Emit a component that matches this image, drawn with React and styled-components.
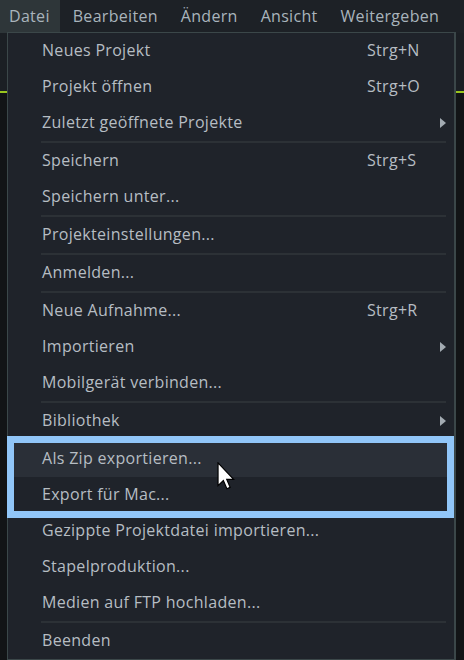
import React from 'react';
import styled, { createGlobalStyle } from 'styled-components';

const GlobalStyle = createGlobalStyle`
  html, body {
    margin: 0;
    padding: 0;
    background: #121416;
  }
  body {
    font-family: "Open Sans", Lato, sans-serif;
    -webkit-font-smoothing: antialiased;
  }
`;

// Layout
const Screen = styled.div`
  position: relative;
  width: 464px;
  height: 660px;
  overflow: hidden;
  background: #121416;
`;

const MenuBar = styled.div`
  display: flex;
  height: 33px;
  background: #1d2126;
`;

const BarItem = styled.div`
  display: flex;
  align-items: center;
  padding: 0 10px 2px 9px;
  margin-right: ${(p) => p.gap || 0}px;
  font-size: 16px;
  letter-spacing: 0.3px;
  color: #a9b4bc;
  background: ${(p) => (p.active ? '#2e3639' : 'transparent')};
`;

const Workspace = styled.div`
  height: 58px;
  background: #1b1f24;
  border-bottom: 2px solid #9ac61e;
`;

const Dropdown = styled.div`
  position: absolute;
  left: 7px;
  top: 32px;
  width: 446px;
  background: #1f232a;
  border: 1px solid #3b4749;
  border-bottom-width: 2px;
  border-right-width: 2px;
`;

const Item = styled.div`
  display: flex;
  align-items: center;
  height: 36px;
  padding: 0 0 3px 34px;
  box-sizing: border-box;
  font-size: 16px;
  letter-spacing: 0.3px;
  color: #b6bdc3;
  background: ${(p) => (p.hover ? '#2a2f37' : 'transparent')};
`;

const Label = styled.span`
  flex: 1;
`;

const Shortcut = styled.span`
  width: 87px;
  color: #b6bdc3;
`;

const Arrow = styled.span`
  width: 0;
  height: 0;
  margin: 3px 8px 0 0;
  border-top: 5px solid transparent;
  border-bottom: 5px solid transparent;
  border-left: 6px solid #a3abb2;
`;

const Separator = styled.div`
  height: 2px;
  margin: 0 8px 0 33px;
  background: #2c3136;
`;

const Highlight = styled.div`
  position: absolute;
  left: 7px;
  top: 436px;
  width: 447px;
  height: 82px;
  box-sizing: border-box;
  border: 7px solid #91c6f8;
  pointer-events: none;
`;

const Cursor = styled.svg`
  position: absolute;
  left: 217px;
  top: 462px;
`;

const menu = [
  { label: 'Neues Projekt', shortcut: 'Strg+N' },
  { label: 'Projekt öffnen', shortcut: 'Strg+O' },
  { label: 'Zuletzt geöffnete Projekte', sub: true },
  'sep',
  { label: 'Speichern', shortcut: 'Strg+S' },
  { label: 'Speichern unter...' },
  'sep',
  { label: 'Projekteinstellungen...' },
  'sep',
  { label: 'Anmelden...' },
  'sep',
  { label: 'Neue Aufnahme...', shortcut: 'Strg+R' },
  { label: 'Importieren', sub: true },
  { label: 'Mobilgerät verbinden...' },
  'sep',
  { label: 'Bibliothek', sub: true },
  'sep',
  { label: 'Als Zip exportieren...', hover: true },
  { label: 'Export für Mac...' },
  { label: 'Gezippte Projektdatei importieren...' },
  { label: 'Stapelproduktion...' },
  { label: 'Medien auf FTP hochladen...' },
  'sep',
  { label: 'Beenden' },
];

const barItems = [
  { label: 'Datei', active: true, gap: 4 },
  { label: 'Bearbeiten', gap: 4 },
  { label: 'Ändern', gap: 4 },
  { label: 'Ansicht', gap: 4 },
  { label: 'Weitergeben' },
];

function App() {
  return (
    <>
      <GlobalStyle />
      <Screen>
        <MenuBar>
          {barItems.map((b) => (
            <BarItem key={b.label} active={b.active} gap={b.gap}>
              {b.label}
            </BarItem>
          ))}
        </MenuBar>
        <Workspace />

        <Dropdown>
          {menu.map((entry, i) =>
            entry === 'sep' ? (
              <Separator key={i} />
            ) : (
              <Item key={i} hover={entry.hover}>
                <Label>{entry.label}</Label>
                {entry.shortcut && <Shortcut>{entry.shortcut}</Shortcut>}
                {entry.sub && <Arrow />}
              </Item>
            )
          )}
        </Dropdown>

        <Highlight />

        <Cursor width="18" height="28" viewBox="0 0 12 19">
          <path
            d="M0.6 0.6 L0.6 16 L4.2 12.6 L6.6 18.2 L8.8 17.2 L6.5 11.8 L11.2 11.8 Z"
            fill="#ffffff"
            stroke="#000000"
            strokeWidth="0.8"
            strokeLinejoin="miter"
          />
        </Cursor>
      </Screen>
    </>
  );
}

export default App;
